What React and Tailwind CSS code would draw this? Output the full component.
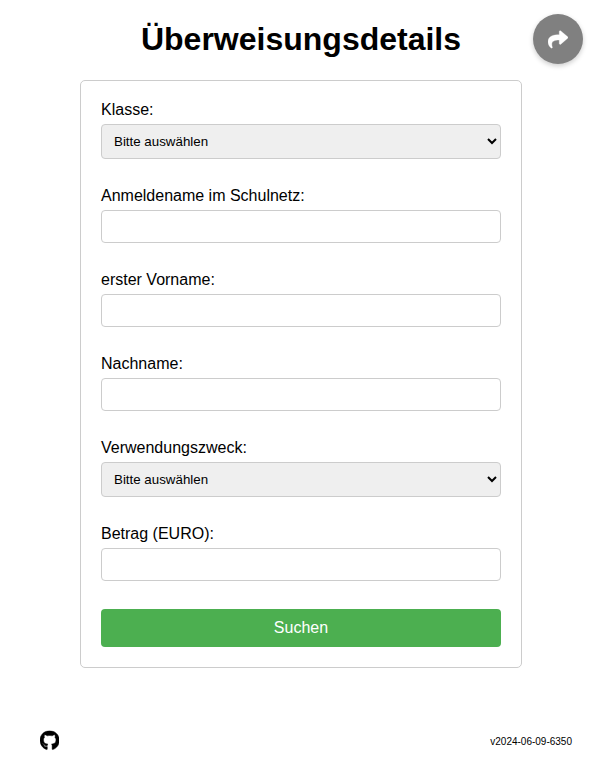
import { FaShare, FaGithub } from "react-icons/fa";

const control = "mt-[5px] mb-7 block w-full rounded border border-[#ccc] text-[13.333px]";

function SelectField({ label, id }) {
  return (
    <>
      <label htmlFor={id} className="block leading-[18px]">{label}</label>
      <select id={id} className={`${control} h-[35px] bg-[#efefef] px-2 text-black`}>
        <option>Bitte auswählen</option>
      </select>
    </>
  );
}

function TextField({ label, id }) {
  return (
    <>
      <label htmlFor={id} className="block leading-[18px]">{label}</label>
      <input id={id} type="text" className={`${control} h-[33px] bg-white px-2`} />
    </>
  );
}

export default function App() {
  return (
    <div className="flex h-[767px] flex-col items-center bg-white font-['Liberation_Sans',Arial,sans-serif] text-base text-black">
      <h1 className="mt-[21px] text-[32px] leading-[37px] font-bold">Überweisungsdetails</h1>
      <button
        aria-label="Teilen"
        className="absolute top-[14px] right-[19px] flex size-[50px] items-center justify-center rounded-full bg-[#808080] text-white shadow-[0_2px_5px_rgba(0,0,0,0.2)]"
      >
        <FaShare size={20} className="translate-y-[0.4px] stroke-white stroke-[8px]" />
      </button>
      <form className="mt-[22px] h-[588px] w-[442px] rounded-[5px] border border-[#ccc] px-5 pt-5">
        <SelectField id="klasse" label="Klasse:" />
        <TextField id="login" label="Anmeldename im Schulnetz:" />
        <TextField id="vorname" label="erster Vorname:" />
        <TextField id="nachname" label="Nachname:" />
        <SelectField id="zweck" label="Verwendungszweck:" />
        <TextField id="betrag" label="Betrag (EURO):" />
        <button type="button" className="block h-[38px] w-full rounded bg-[#4caf50] leading-[18px] text-white">
          Suchen
        </button>
      </form>
      <footer className="mt-auto mb-[17px] flex h-5 w-full items-start justify-between pr-[30px] pl-10">
        <FaGithub className="h-5 w-[19.375px] translate-y-[0.4px] stroke-black stroke-[12px]" />
        <span className="pt-1.5 text-[10px] leading-3">v2024-06-09-6350</span>
      </footer>
    </div>
  );
}
